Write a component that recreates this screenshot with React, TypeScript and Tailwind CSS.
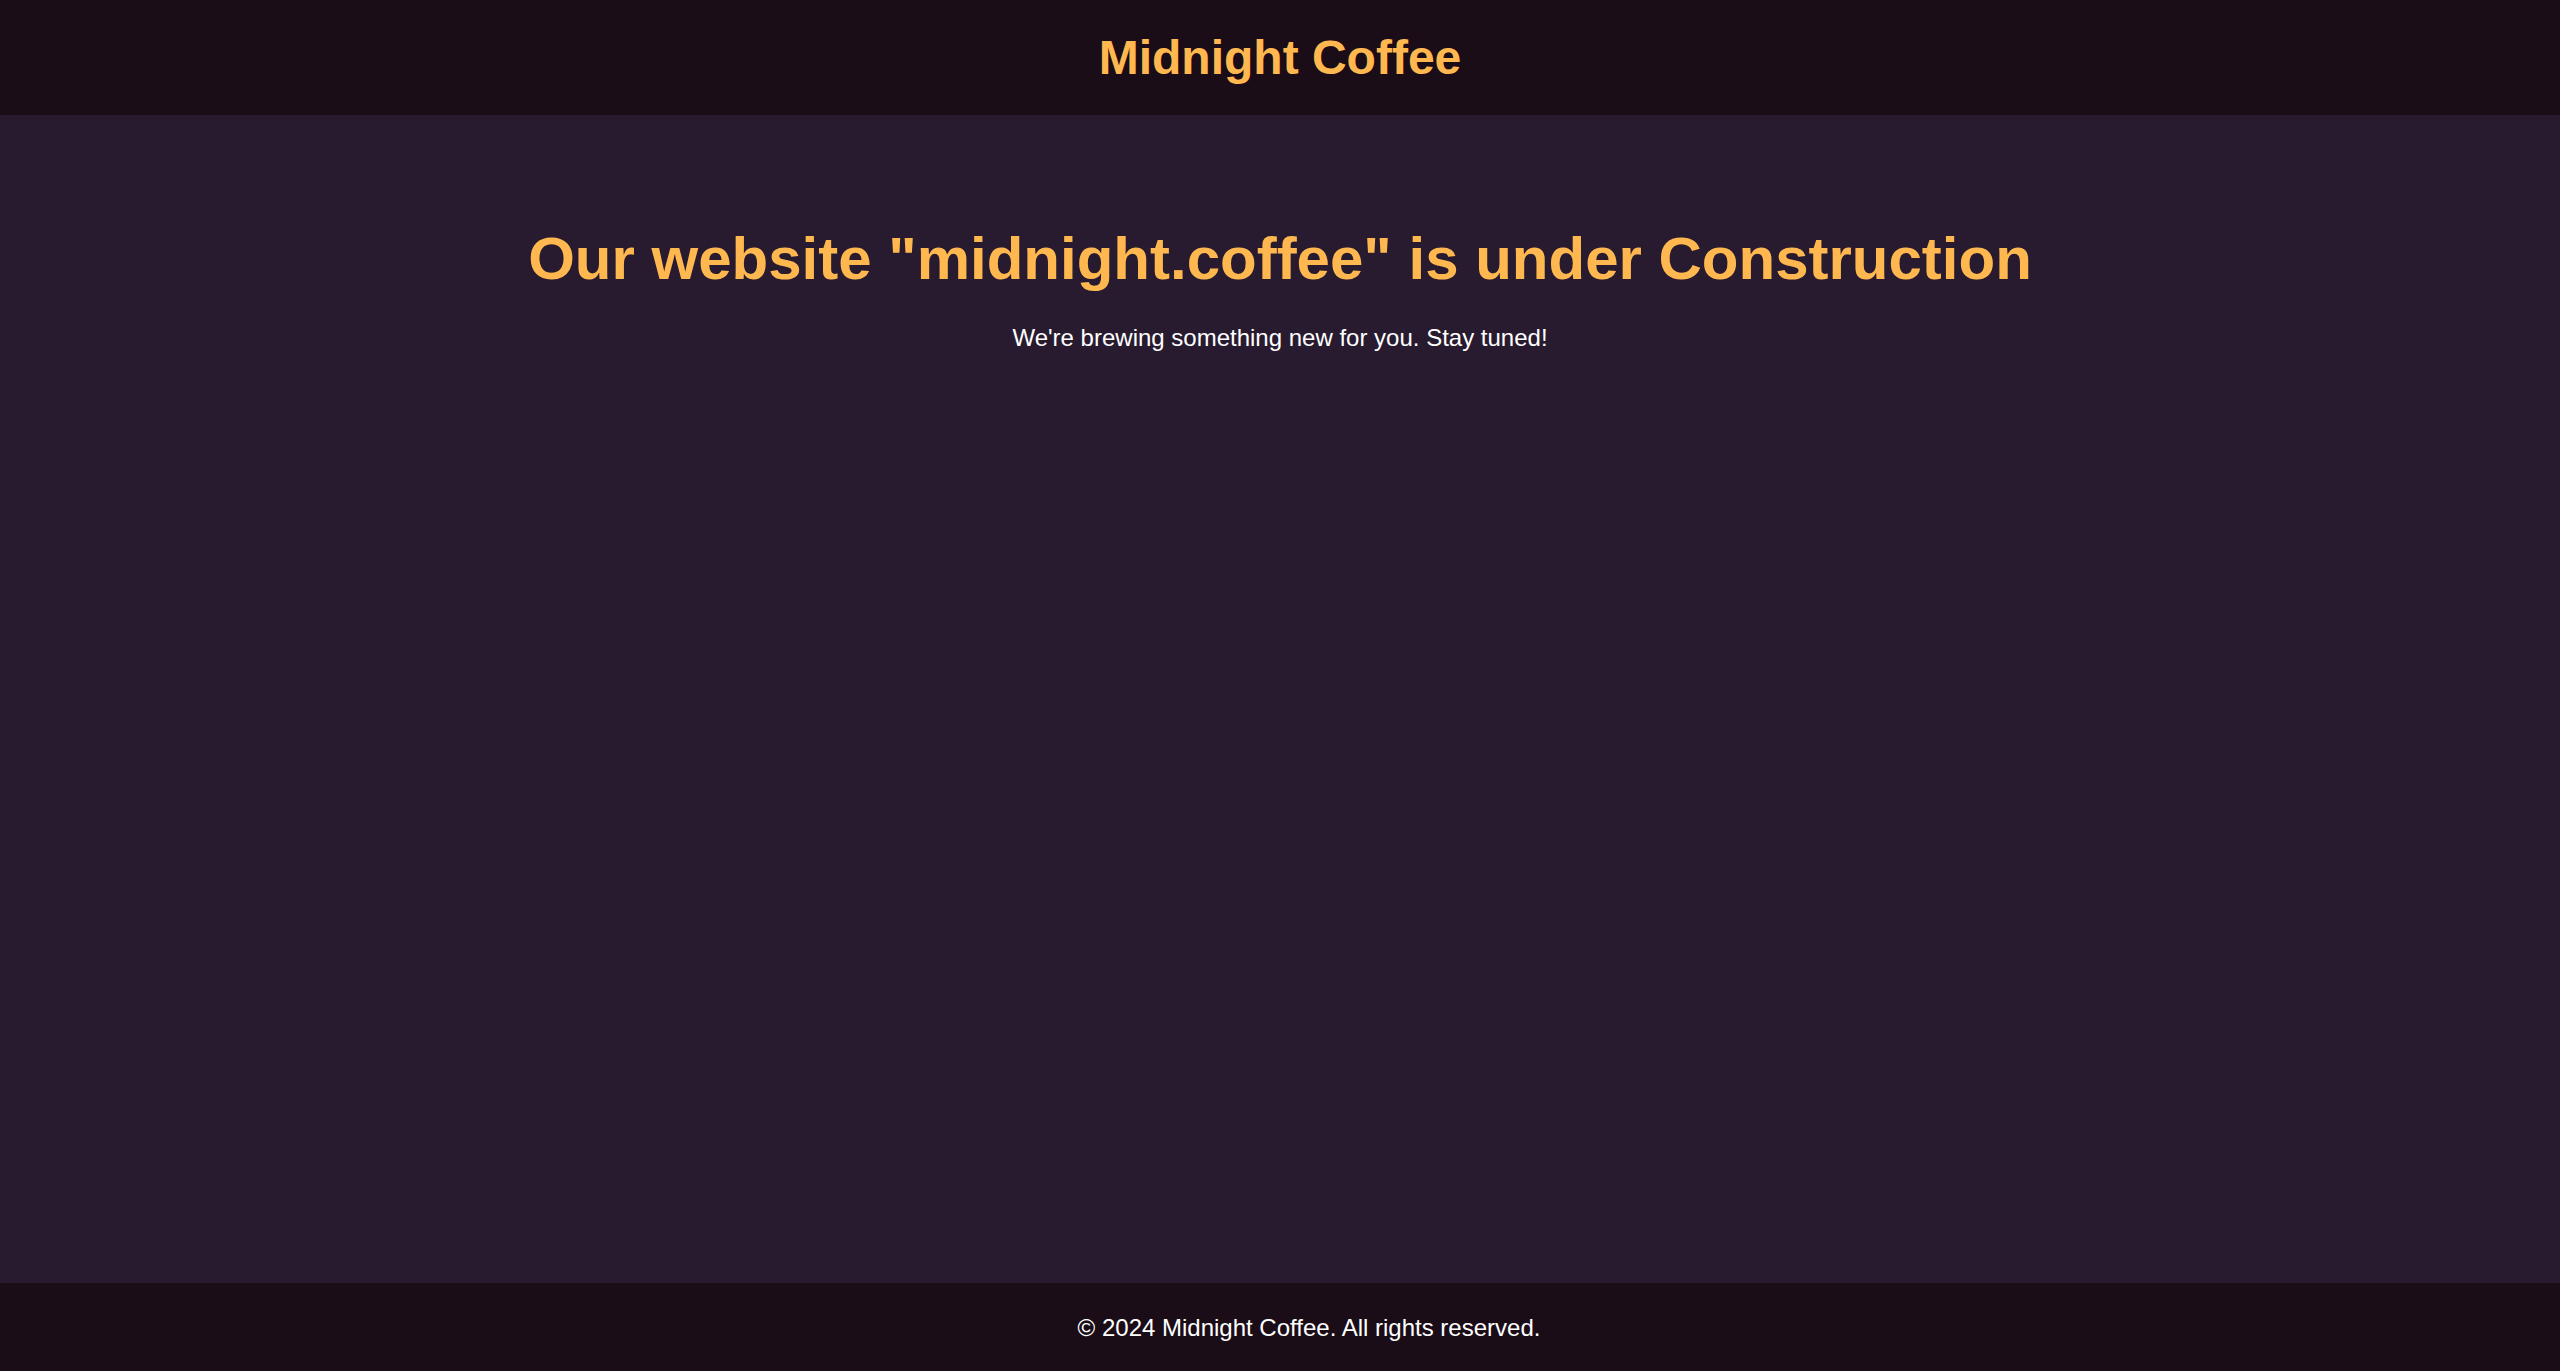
import React from "react";

export default function App() {
  return (
    <div
      className="flex flex-col h-[1371px] w-full bg-[#281b2f]"
      style={{ fontFamily: '"Liberation Sans", Arial, sans-serif' }}
    >
      <header className="bg-[#1a0d17] py-[30px] text-center">
        <h1 className="text-[48px] leading-[55px] font-bold text-[#ffb84f]">Midnight Coffee</h1>
      </header>
      <main className="flex-1 bg-[#281b2f] text-center pt-[109px]">
        <h2 className="text-[60px] leading-[69px] font-bold text-[#ffb84f]">
          Our website "midnight.coffee" is under Construction
        </h2>
        <p className="mt-[31px] text-[24px] leading-[28px] text-white">
          We're brewing something new for you. Stay tuned!
        </p>
      </main>
      <footer className="bg-[#1a0d17] h-[88px] flex items-center justify-center pl-[58px] pt-[2px]">
        <p className="text-[24px] leading-[28px] text-white">© 2024 Midnight Coffee. All rights reserved.</p>
      </footer>
    </div>
  );
}
